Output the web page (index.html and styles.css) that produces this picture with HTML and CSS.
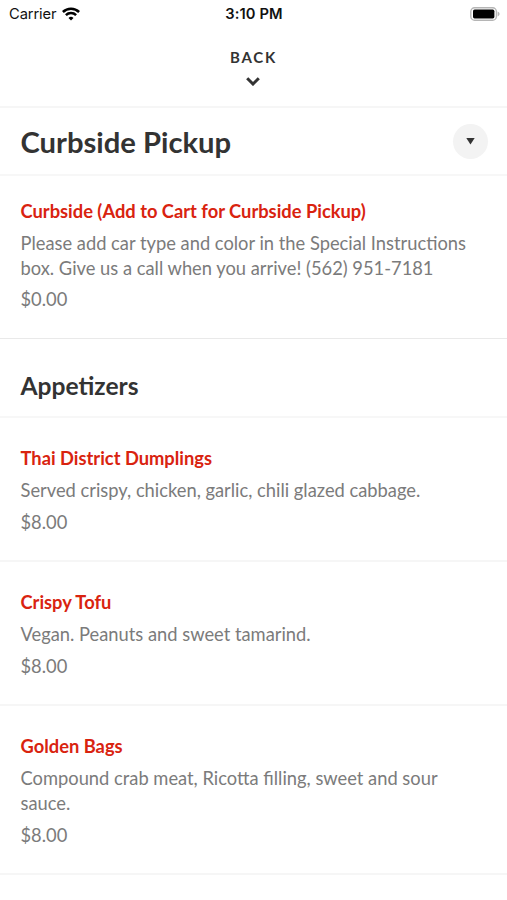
FILE: index.html
```html
<!DOCTYPE html>
<html lang="en">
<head>
<meta charset="utf-8">
<title>Menu</title>
<link rel="stylesheet" href="styles.css">
</head>
<body>
<header class="status">
  <div class="carrier"><span>Carrier</span>
    <svg width="18" height="14" viewBox="0 0 18 14"><g fill="none" stroke="#000" stroke-width="2.5"><path d="M.9 5a11.5 11.5 0 0 1 16.2 0"/><path d="M3.9 8.2a7.2 7.2 0 0 1 10.2 0"/></g><path d="M9 13.5L6.5 11a3.6 3.6 0 0 1 5 0z"/></svg>
  </div>
  <time class="clock">3:10 PM</time>
  <svg class="battery" width="30" height="14" viewBox="0 0 30 14"><rect x=".8" y=".8" width="25.6" height="12.4" rx="3.8" fill="none" stroke="#b5b5b5" stroke-width="1.4"/><rect x="3" y="2.6" width="21.4" height="8.8" rx="1.6"/><path d="M27.6 4.6c2.6 1 2.6 3.8 0 4.8z" fill="#b5b5b5"/></svg>
</header>
<nav class="back"><span>BACK</span>
  <svg width="14" height="9" viewBox="0 0 14 9"><path d="M1.2 1.2L7 7l5.8-5.8" fill="none" stroke="#333" stroke-width="3"/></svg>
</nav>
<main>
  <div class="category">
    <h1>Curbside Pickup</h1>
    <button class="toggle" aria-label="Choose category"><svg width="9" height="7" viewBox="0 0 9 7"><path d="M.3 0h8.4L4.5 6.6z" fill="#333"/></svg></button>
  </div>
  <article class="item first"><h3>Curbside (Add to Cart for Curbside Pickup)</h3><p>Please add car type and color in the Special Instructions<br>box. Give us a call when you arrive! (562) 951-7181</p><div class="price">$0.00</div></article>
  <h2>Appetizers</h2>
  <article class="item"><h3>Thai District Dumplings</h3><p>Served crispy, chicken, garlic, chili glazed cabbage.</p><div class="price">$8.00</div></article>
  <article class="item"><h3>Crispy Tofu</h3><p>Vegan. Peanuts and sweet tamarind.</p><div class="price">$8.00</div></article>
  <article class="item"><h3>Golden Bags</h3><p>Compound crab meat, Ricotta filling, sweet and sour<br>sauce.</p><div class="price">$8.00</div></article>
</main>
</body>
</html>
```
FILE: styles.css
```css
* { box-sizing: border-box; }
body { margin: 0; height: 900px; overflow: hidden; background: #fff; color: #333; font-family: Lato, sans-serif; }
svg { display: block; flex: none; }
h1, h2, h3, p { margin: 0; }
.status { height: 28px; padding: 0 7px 2px 9px; display: grid; grid-template-columns: 1fr auto 1fr; align-items: center; color: #111; font: 14.7px/26px Inter, sans-serif; }
.carrier { display: flex; align-items: center; gap: 6px; letter-spacing: -.1px; }
.carrier span, .clock { padding-top: 1px; }
.clock { margin-right: 1px; font-weight: 600; letter-spacing: .1px; }
.battery { justify-self: end; }
.back { height: 80px; padding-top: 19px; display: flex; flex-direction: column; align-items: center; border-bottom: 2px solid #f6f6f6; font-size: 15px; line-height: 20px; font-weight: 700; letter-spacing: 1.8px; }
.back svg { margin: 10px 1px 0 0; }
.category { height: 68px; padding: 0 19px 0 20.5px; display: flex; align-items: center; justify-content: space-between; border-bottom: 2px solid #f7f7f7; }
h1 { padding-top: 1px; font-size: 29.2px; line-height: 34px; font-weight: 700; }
.toggle { width: 35px; height: 35px; padding: 0; border: 0; border-radius: 50%; background: #f3f3f3; display: grid; place-items: center; }
.item { padding: 28px 20.5px 25px; border-bottom: 2px solid #f6f6f6; font-size: 18.32px; line-height: 25px; color: #7b7b7b; }
.item.first { padding: 23px 20.5px 26px; border-bottom: 1px solid #e9e9e9; }
h3 { font-size: 18.32px; line-height: 25px; font-weight: 700; color: #d9230f; }
.item p { margin: 7px 0 6.6px; }
.item.first p { line-height: 24.7px; margin-bottom: 6.6px; }
.price { margin-bottom: .4px; }
h2 { height: 79px; padding: 32px 20.5px 0; border-bottom: 2px solid #f7f7f7; font-size: 24.6px; line-height: 29px; font-weight: 700; }
```
